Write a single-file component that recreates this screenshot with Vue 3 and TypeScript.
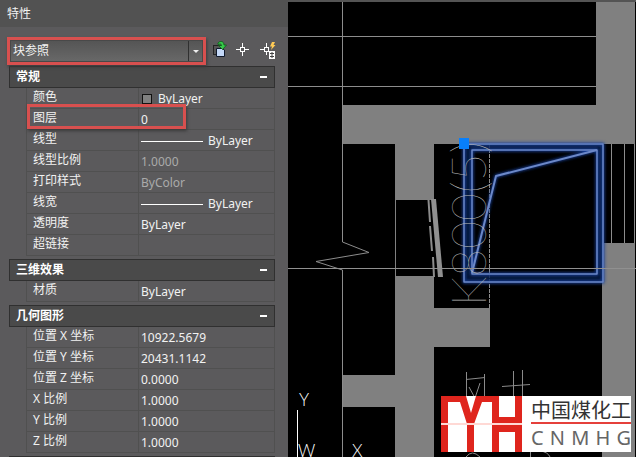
<script setup lang="ts">
import { reactive, ref } from 'vue'

interface Property {
  name: string
  value: string
  sample?: 'swatch' | 'line'
  muted?: boolean
  marked?: boolean
}

interface Section {
  title: string
  open: boolean
  rows: Property[]
}

const selection = ref('块参照')

const sections = reactive<Section[]>([
  {
    title: '常规',
    open: true,
    rows: [
      { name: '颜色', value: 'ByLayer', sample: 'swatch' },
      { name: '图层', value: '0', marked: true },
      { name: '线型', value: 'ByLayer', sample: 'line' },
      { name: '线型比例', value: '1.0000', muted: true },
      { name: '打印样式', value: 'ByColor', muted: true },
      { name: '线宽', value: 'ByLayer', sample: 'line' },
      { name: '透明度', value: 'ByLayer' },
      { name: '超链接', value: '' },
    ],
  },
  {
    title: '三维效果',
    open: true,
    rows: [{ name: '材质', value: 'ByLayer' }],
  },
  {
    title: '几何图形',
    open: true,
    rows: [
      { name: '位置 X 坐标', value: '10922.5679' },
      { name: '位置 Y 坐标', value: '20431.1142' },
      { name: '位置 Z 坐标', value: '0.0000' },
      { name: 'X 比例', value: '1.0000' },
      { name: 'Y 比例', value: '1.0000' },
      { name: 'Z 比例', value: '1.0000' },
    ],
  },
])

const latin = ['C', 'N', 'M', 'H', 'G']
</script>

<template>
  <main class="app">
    <aside class="palette">
      <h1 class="title">特性</h1>
      <div class="toolbar">
        <div class="picker">
          <select v-model="selection" aria-label="对象类型">
            <option>块参照</option>
          </select>
          <span class="arrow"></span>
        </div>
        <div class="tools">
          <button type="button" aria-label="切换 PICKADD">
            <svg width="16" height="18" viewBox="0 0 16 18">
              <rect x="1.500" y="4.500" width="9" height="9" fill="#555" stroke="#252525" />
              <path d="M4.500 7.500H10L12.500 9V15.500H4.500Z" fill="#c4d8f8" stroke="#111a2c" />
              <path d="M6 2C8 -.5 12 0 12 4H14.500L10.500 8.500 6.500 4.500H9.500C9.500 3 8 2.500 6 3.500Z" fill="#37c84a" stroke="#0b5a18" stroke-width=".8" />
            </svg>
          </button>
          <button type="button" aria-label="选择对象">
            <svg width="16" height="18" viewBox="0 0 16 18" fill="none" stroke="#fff" shape-rendering="crispEdges">
              <path d="M6.500 2V6M6.500 11V15M0 8.500H4M9 8.500H13" />
              <rect x="4.500" y="6.500" width="4" height="4" />
            </svg>
          </button>
          <button type="button" aria-label="快速选择">
            <svg width="16" height="18" viewBox="0 0 16 18" fill="none" stroke="#fff">
              <path d="M6.500 2V6M6.500 11V14M0 8.500H4" />
              <rect x="4.500" y="6.500" width="4" height="4" />
              <path d="M12 1H15L13.500 4H15.500L11 9 12 5.500H10Z" fill="#ffcb55" stroke="none" />
              <rect x="9" y="10" width="6" height="8" fill="#fff" stroke="none" />
              <path d="M10 12.500H14M10 15.500H14M12 11V17" stroke="#444" />
            </svg>
          </button>
        </div>
      </div>

      <section v-for="section in sections" :key="section.title" class="group">
        <button class="head" type="button" :aria-expanded="section.open" @click="section.open = !section.open">
          <span>{{ section.title }}</span>
          <i :class="{ plus: !section.open }"></i>
        </button>
        <table v-if="section.open">
          <tbody>
            <tr v-for="row in section.rows" :key="row.name">
              <th scope="row" :class="{ marked: row.marked }">{{ row.name }}</th>
              <td :class="{ muted: row.muted }">
                <div class="value">
                  <span v-if="row.sample" :class="row.sample"></span>{{ row.value }}
                </div>
              </td>
            </tr>
          </tbody>
        </table>
      </section>
      <div class="next"></div>
    </aside>

    <div class="canvas">
      <svg class="plan" viewBox="288 0 348 457" preserveAspectRatio="xMinYMin slice">
        <defs>
          <filter id="glow" x="-20%" y="-20%" width="140%" height="140%">
            <feGaussianBlur stdDeviation="1.500" />
          </filter>
        </defs>
        <rect x="288" width="348" height="457" fill="#808080" />
        <g fill="#000">
          <rect x="288" y="2" width="54" height="455" />
          <rect x="342" y="2" width="254" height="103" />
          <rect x="342" y="144" width="53" height="231" />
          <rect x="342" y="407" width="53" height="50" />
          <rect x="396" y="200" width="38" height="76" />
          <rect x="434" y="144" width="56" height="164" />
          <rect x="490" y="144" width="112" height="203" />
          <rect x="434" y="347" width="168" height="110" />
          <rect x="602" y="144" width="34" height="99" />
          <rect x="635" y="2" width="1" height="455" />
        </g>
        <rect x="288" width="348" height="2" fill="#545454" />
        <g fill="none" stroke="#8c8c8c">
          <path d="M288 36.500H596M288 86.500H596M342.500 2V242L369 252.500 316 261.500 342.500 270V457" />
          <path d="M611.500 144V243M624.500 144V243M634.500 144V243" />
          <path d="M489.500 144V308" stroke-dasharray="4 1" />
          <path d="M428.500 200L430 222M430 226L432 251M433 257L434 277" stroke-width="2" />
        </g>
        <path d="M431 199H436L443 277H438Z" fill="#909090" />

        <g fill="none" stroke="#8a8a8a">
          <path d="M466.500 372V398M484.500 374V398M466 379.500L485 377.500M469 387L475 398 480 383M513.500 371V398M522.500 370V398M502 386.500L530 384.500" />
          <path d="M466 457Q472 449 480 457M540 451Q548 452 550 457M530.500 452V457" />
        </g>

        <g fill="none" stroke-linejoin="round">
          <path d="M468 147V278H600V147Z" stroke="#061a45" stroke-width="8" stroke-opacity=".8" />
          <g stroke="#17409c" stroke-width="3" filter="url(#glow)">
            <path d="M464 144H603V282H464ZM472 150H597V274H472ZM472 273L496 176 597 150" />
          </g>
          <g stroke="#6c88c8">
            <path d="M464 144H603V282H464ZM472 150H597V274H472Z" stroke-width="1.500" />
            <path d="M472 273L496 176 597 150" stroke-width="2" />
          </g>
        </g>
        <text class="room" transform="translate(486 306) rotate(-90)">K800(5)</text>
        <path d="M288 268.500H636" stroke="#909090" />
        <rect x="459" y="138" width="10" height="11" fill="#087ffb" />

        <path d="M297.500 410V457" stroke="#fff" />
        <g class="axis">
          <text x="299" y="406">Y</text>
          <text x="298" y="457">W</text>
          <text x="352" y="457">X</text>
        </g>
      </svg>

      <div class="brand">
        <svg width="82" height="56" viewBox="0 0 82 56" aria-hidden="true">
          <path fill="#df251d" d="M0 0H25L30 17 35 0H58V21H74V0H81V56H74V36H58V56H51V6H41L33 28V56H26V28L19 6H7V56H0Z" />
          <path fill="#df251d" d="M51 21H81V36H51Z" />
          <path d="M0 28H81" stroke="#ffd9d5" stroke-width="2" />
        </svg>
        <div class="words">
          <strong>中国煤化工</strong>
          <div class="latin"><span v-for="letter in latin" :key="letter">{{ letter }}</span></div>
        </div>
      </div>
    </div>
  </main>
</template>

<style>
body {
  margin: 0;
  background: #5b5a5c;
}
</style>

<style scoped>
*,
*::after {
  box-sizing: border-box;
}

.app {
  display: grid;
  grid-template-columns: 288px minmax(0, 1fr);
  height: 100vh;
  overflow: hidden;
  color: #f2f2f2;
  font: 12px/20px "Noto Sans", "Noto Sans CJK SC", sans-serif;
}

.palette {
  overflow: hidden;
  background: #5b5a5c;
}

.title {
  margin: 0;
  padding: 4px 7px 3px;
  background: #525252;
  font-size: 12px;
  font-weight: 400;
  line-height: 20px;
}

.toolbar {
  display: flex;
  align-items: center;
  gap: 6px;
  padding: 10px 12px 1px 7px;
}

.picker {
  position: relative;
  flex: 1;
  border: 3px solid #d8504f;
  box-shadow: 1px 2px 3px #3b3b3b;
}

.picker select {
  display: block;
  width: 100%;
  height: 22px;
  padding: 0 2px;
  border: 1px solid #494949;
  border-radius: 0;
  appearance: none;
  background: linear-gradient(#555, #686868);
  color: inherit;
  font: inherit;
}

.arrow {
  position: absolute;
  top: 1px;
  right: 0;
  display: grid;
  place-items: center;
  width: 15px;
  height: 20px;
  border-left: 1px solid #303030;
  pointer-events: none;
}

.arrow::after {
  border: 3px solid transparent;
  border-top-color: #eee;
  border-bottom: 0;
  content: "";
}

.tools {
  display: flex;
  align-items: center;
  gap: 8px;
}

.tools button {
  display: grid;
  padding: 0 0 2px;
  border: 0;
  background: none;
}

.group {
  margin: 0 13px 3px 9px;
}

.head {
  display: flex;
  align-items: center;
  justify-content: space-between;
  width: 100%;
  height: 22px;
  padding: 0 7px 0 6px;
  border: 1px solid #303030;
  background: #4a4a4a;
  color: #fff;
  font: inherit;
  font-weight: 700;
}

.head i {
  position: relative;
  width: 7px;
  height: 2px;
  background: #fff;
}

.head i.plus::after {
  position: absolute;
  top: -2px;
  left: 3px;
  width: 2px;
  height: 6px;
  background: #fff;
  content: "";
}

table {
  width: 249px;
  margin-left: 17px;
  border-right: 1px solid #505050;
  border-left: 1px solid #505050;
  border-spacing: 0;
  table-layout: fixed;
}

th,
td {
  height: 21px;
  padding: 0;
  border-bottom: 1px solid #505050;
  font-weight: 400;
  line-height: 18px;
  text-align: left;
  vertical-align: top;
}

th {
  position: relative;
  width: 112px;
  padding-left: 6px;
  border-right: 1px solid #505050;
}

td {
  padding: 2px 0 0 2px;
}

.value {
  display: flex;
  align-items: center;
  height: 18px;
}

.muted {
  color: #aaa;
}

.swatch {
  flex: none;
  width: 10px;
  height: 10px;
  margin: 0 6px 0 1px;
  border: 1px solid #111;
  background: #808080;
}

.line {
  flex: none;
  width: 62px;
  height: 1px;
  margin-right: 5px;
  background: #fff;
}

.marked::after {
  position: absolute;
  z-index: 1;
  top: -5px;
  left: 0;
  width: 159px;
  height: 25px;
  border: 3px solid #d8504f;
  box-shadow: 1px 2px 3px #3b3b3b;
  content: "";
}

.next {
  height: 22px;
  margin: 0 13px 0 9px;
  border: 1px solid #303030;
  background: #4a4a4a;
}

.canvas {
  position: relative;
  overflow: hidden;
}

.plan {
  display: block;
  width: 100%;
  height: 100%;
}

.room {
  fill: #b8b8b8;
  font: 100 48px Lato, "Noto Sans", sans-serif;
}

.axis {
  fill: #fff;
  font: 300 17px Lato, "Noto Sans", sans-serif;
}

.brand {
  position: absolute;
  right: 5px;
  bottom: 5px;
  display: flex;
  gap: 8px;
  height: 56px;
  background: #fff;
}

.words {
  width: 100px;
  color: #333;
}

.words strong {
  display: block;
  height: 28px;
  border-bottom: 2px solid #e5403b;
  font: 400 20px/27px "Noto Sans CJK SC", sans-serif;
}

.latin {
  display: flex;
  justify-content: space-between;
  color: #666;
  font: 20px/28px "Noto Sans", sans-serif;
}
</style>
